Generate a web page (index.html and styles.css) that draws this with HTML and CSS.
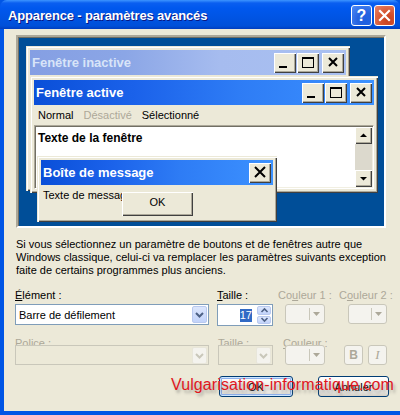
FILE: index.html
```html
<!DOCTYPE html>
<html>
<head>
<meta charset="utf-8">
<link rel="stylesheet" href="styles.css">
</head>
<body>
<div class="dialog">
  <div class="titlebar">
    <span class="title">Apparence - paramètres avancés</span>
    <div class="tb-buttons">
      <span class="tb-btn help">?</span>
      <span class="tb-btn close"><svg width="21" height="21" viewBox="0 0 21 21"><path d="M6 6 L15 15 M15 6 L6 15" stroke="#fff" stroke-width="2.2" stroke-linecap="square"/></svg></span>
    </div>
  </div>
  <div class="frame">
    <div class="preview">
      <div class="pwin inactive">
        <div class="ptitle">
          <span class="ptext-title">Fenêtre inactive</span>
          <div class="pbtns">
            <span class="cbtn"><svg width="22" height="20" viewBox="0 0 22 20"><rect x="5" y="13" width="8" height="2" fill="#000"/></svg></span>
            <span class="cbtn"><svg width="22" height="20" viewBox="0 0 22 20"><rect x="5.5" y="4.5" width="11" height="10" fill="none" stroke="#000"/><rect x="5" y="4" width="12" height="2" fill="#000"/></svg></span>
            <span class="cbtn gap"><svg width="22" height="20" viewBox="0 0 22 20"><path d="M7 5 L15 13 M15 5 L7 13" stroke="#000" stroke-width="2"/></svg></span>
          </div>
        </div>
      </div>
      <div class="pwin active">
        <div class="ptitle">
          <span class="ptext-title">Fenêtre active</span>
          <div class="pbtns">
            <span class="cbtn"><svg width="22" height="20" viewBox="0 0 22 20"><rect x="5" y="13" width="8" height="2" fill="#000"/></svg></span>
            <span class="cbtn"><svg width="22" height="20" viewBox="0 0 22 20"><rect x="5.5" y="4.5" width="11" height="10" fill="none" stroke="#000"/><rect x="5" y="4" width="12" height="2" fill="#000"/></svg></span>
            <span class="cbtn gap"><svg width="22" height="20" viewBox="0 0 22 20"><path d="M7 5 L15 13 M15 5 L7 13" stroke="#000" stroke-width="2"/></svg></span>
          </div>
        </div>
        <div class="pmenu">
          <span>Normal</span><span class="dis">Désactivé</span><span>Sélectionné</span>
        </div>
        <div class="ptextarea">
          <span class="wtext">Texte de la fenêtre</span>
          <div class="scroll">
            <span class="sbtn"><svg width="17" height="17" viewBox="0 0 17 17"><path d="M5 10 L12 10 L8.5 6.5 Z" fill="#000"/></svg></span>
            <span class="strack"></span>
            <span class="sbtn"><svg width="17" height="17" viewBox="0 0 17 17"><path d="M5 7 L12 7 L8.5 10.5 Z" fill="#000"/></svg></span>
          </div>
        </div>
      </div>
      <div class="pwin msg">
        <div class="ptitle">
          <span class="ptext-title">Boîte de message</span>
          <div class="pbtns">
            <span class="cbtn"><svg width="22" height="20" viewBox="0 0 22 20"><path d="M6 4 L16 14 M16 4 L6 14" stroke="#000" stroke-width="2"/></svg></span>
          </div>
        </div>
        <div class="msgbody">
          <span class="msgtext">Texte de message</span>
          <span class="okbtn">OK</span>
        </div>
      </div>
    </div>

    <p class="info">Si vous sélectionnez un paramètre de boutons et de fenêtres autre que<br>Windows classique, celui-ci va remplacer les paramètres suivants exception<br>faite de certains programmes plus anciens.</p>

    <div class="form">
      <span class="lbl"><u>É</u>lément :</span>
      <span class="lbl"><u>T</u>aille :</span>
      <span class="lbl dis c3a">Co<u>u</u>leur 1 :</span>
      <span class="lbl dis">C<u>o</u>uleur 2 :</span>

      <div class="combo wide"><span class="cval">Barre de défilement</span><span class="dd"><svg width="15" height="17" viewBox="0 0 15 17"><path d="M4 7 L7.5 10.5 L11 7" fill="none" stroke="#4D6185" stroke-width="2"/></svg></span></div>
      <div class="spin"><span class="sval"><span class="sel">17</span></span><span class="arrows"><span class="ar"><svg width="15" height="9" viewBox="0 0 15 9"><path d="M4.5 6 L7.5 3 L10.5 6" fill="none" stroke="#4D6185" stroke-width="1.6"/></svg></span><span class="ar"><svg width="15" height="9" viewBox="0 0 15 9"><path d="M4.5 3 L7.5 6 L10.5 3" fill="none" stroke="#4D6185" stroke-width="1.6"/></svg></span></span></div>
      <div class="colbtn c3b"><span class="sep"></span><svg width="7" height="4" viewBox="0 0 7 4"><path d="M0 0 L7 0 L3.5 4 Z" fill="#ACA899"/></svg></div>
      <div class="colbtn c4b"><span class="sep"></span><svg width="7" height="4" viewBox="0 0 7 4"><path d="M0 0 L7 0 L3.5 4 Z" fill="#ACA899"/></svg></div>

      <span class="lbl dis r2"><u>P</u>olice :</span>
      <span class="lbl dis r2 c2l">Taille :</span>
      <span class="lbl dis r2 c3l"><u>C</u>ouleur :</span>
      <span class="r2"></span>

      <div class="combo wide disabled"><span class="cval"></span><span class="dd"><svg width="15" height="17" viewBox="0 0 15 17"><path d="M4 7 L7.5 10.5 L11 7" fill="none" stroke="#C9C7BA" stroke-width="2"/></svg></span></div>
      <div class="combo small disabled"><span class="cval"></span><span class="dd"><svg width="15" height="17" viewBox="0 0 15 17"><path d="M4 7 L7.5 10.5 L11 7" fill="none" stroke="#C9C7BA" stroke-width="2"/></svg></span></div>
      <div class="colbtn c3b"><span class="sep"></span><svg width="7" height="4" viewBox="0 0 7 4"><path d="M0 0 L7 0 L3.5 4 Z" fill="#ACA899"/></svg></div>
      <div class="bi"><span class="sbtn2 bold">B</span><span class="sbtn2 ital">I</span></div>
    </div>

    <div class="actions">
      <span class="xpbtn default">OK</span>
      <span class="xpbtn">Annuler</span>
    </div>
  </div>
  <div class="watermark">Vulgarisation-informatique.com</div>
</div>
</body>
</html>
```

FILE: styles.css
```css
html, body {
  margin: 0;
  padding: 0;
}
body {
  width: 400px;
  height: 415px;
  overflow: hidden;
  font-family: "Liberation Sans", Arial, sans-serif;
  font-size: 11px;
  color: #000;
}
.dialog {
  position: relative;
  width: 400px;
  height: 415px;
  display: flex;
  flex-direction: column;
  background: #0055E5;
}
.titlebar {
  height: 29px;
  flex: none;
  display: flex;
  align-items: flex-start;
  justify-content: space-between;
  background: linear-gradient(to bottom, #3D95FF 0, #0A5FF0 3px, #0058EE 8px, #0054E3 18px, #0050D8 26px, #003DBF 29px);
  border-radius: 7px 7px 0 0;
}
.title {
  color: #fff;
  font-weight: bold;
  font-size: 13px;
  line-height: 16px;
  margin: 8px 0 0 8px;
  letter-spacing: -0.15px;
  text-shadow: 1px 1px #0A1883;
}
.tb-buttons {
  display: flex;
  gap: 2px;
  margin: 5px 5px 0 0;
}
.tb-btn {
  width: 19px;
  height: 19px;
  border: 1px solid #fff;
  border-radius: 3px;
  display: flex;
  align-items: center;
  justify-content: center;
  overflow: hidden;
}
.tb-btn.help {
  background: radial-gradient(circle at 70% 75%, #1F5FE0 0, #2663E0 40%, #4F8CF8 100%);
  color: #fff;
  font-weight: bold;
  font-size: 16px;
  font-family: "Liberation Sans", Arial, sans-serif;
}
.tb-btn.close {
  background: radial-gradient(circle at 70% 75%, #C4401E 0, #D5532F 40%, #E8856B 100%);
}
.tb-btn svg { flex: none; }

.frame {
  flex: 1;
  background: #ECE9D8;
  margin: 0 0 4px 4px;
  padding: 6px 0 0 12px;
  display: flex;
  flex-direction: column;
  position: relative;
}

/* preview */
.preview {
  position: relative;
  width: 366px;
  height: 189px;
  background: #004E98;
  border-style: solid;
  border-width: 2px;
  border-color: #ACA899 #fff #fff #ACA899;
  box-shadow: inset 1px 1px #716F64;
  flex: none;
}
.pwin {
  position: absolute;
  box-sizing: border-box;
  background: #ECE9D8;
  padding: 4px;
  box-shadow: inset 1px 1px #ECE9D8, inset 2px 2px #fff, inset -1px -1px #404040, inset -2px -2px #ACA899;
  display: flex;
  flex-direction: column;
}
.pwin.inactive { left: 8px; top: 9px; width: 324px; height: 145px; }
.pwin.active { left: 12px; top: 39px; width: 348px; height: 117px; }
.pwin.msg { left: 19px; top: 119px; width: 240px; height: 66px; }

.ptitle {
  height: 25px;
  flex: none;
  display: flex;
  align-items: center;
  justify-content: space-between;
  font-weight: bold;
  font-size: 13px;
  padding-left: 2px;
}
.inactive .ptitle {
  background: linear-gradient(90deg, #859FE3 0, #8BA6E6 30%, #A6BCEF 60%, #A9C0F1 100%);
  color: #D8E4F8;
}
.active .ptitle, .msg .ptitle {
  background: linear-gradient(90deg, #0A4FD8 0, #1B62EA 30%, #2E7CF5 60%, #3D92FF 100%);
  color: #fff;
}
.pbtns {
  display: flex;
  margin-right: 2px;
}
.cbtn {
  width: 22px;
  height: 20px;
  margin-left: 1px;
  background: #ECE9D8;
  box-shadow: inset 1px 1px #fff, inset -1px -1px #404040, inset -2px -2px #ACA899;
  display: block;
}
.cbtn svg { display: block; }
.cbtn.gap { margin-left: 3px; }

.pmenu {
  height: 20px;
  flex: none;
  display: flex;
  align-items: center;
  gap: 10px;
  padding-left: 4px;
}
.pmenu .dis { color: #ACA899; }

.ptextarea {
  flex: 1;
  background: #fff;
  display: flex;
  justify-content: space-between;
  border-style: solid;
  border-width: 1px;
  border-color: #ACA899 #fff #fff #ACA899;
  box-shadow: inset 1px 1px #716F64, inset -1px -1px #F1EFE2;
  padding: 1px;
}
.wtext {
  font-weight: bold;
  font-size: 12px;
  margin: 4px 0 0 2px;
}
.scroll {
  width: 17px;
  display: flex;
  flex-direction: column;
}
.sbtn {
  width: 17px;
  height: 17px;
  flex: none;
  background: #ECE9D8;
  box-shadow: inset 1px 1px #fff, inset -1px -1px #404040, inset -2px -2px #ACA899;
}
.sbtn svg { display: block; }
.strack {
  flex: 1;
  background: #DCD9CD;
}

.msgbody {
  position: relative;
  flex: 1;
  padding: 4px 0 0 2px;
  overflow: hidden;
}
.msgtext { white-space: nowrap; }
.okbtn {
  position: absolute;
  left: 81px;
  top: 7px;
  width: 71px;
  height: 24px;
  background: #ECE9D8;
  box-shadow: inset 1px 1px #fff, inset -1px -1px #404040, inset -2px -2px #ACA899;
  display: flex;
  align-items: center;
  justify-content: center;
  padding-bottom: 4px;
  box-sizing: border-box;
}

/* text */
.info {
  margin: 10px 0 0 0;
  line-height: 13px;
  white-space: nowrap;
}

/* form */
.form {
  margin-top: 12px;
  display: grid;
  grid-template-columns: 202px 61px 61px 48px;
  grid-template-rows: 13px 21px 13px 21px;
  row-gap: 2px;
  margin-left: -1px;
}
.form .r2 { margin-top: 10px; }
.form .lbl { line-height: 13px; white-space: nowrap; }
.form .lbl.dis { color: #ACA899; }
.form .c3a { margin-left: 0; }
.form .c2l { margin-left: 1px; }
.form .c3l { margin-left: 5px; }
.form > .r2 + .combo, .form .r2 ~ div { margin-top: 3px; }

.combo {
  box-sizing: border-box;
  height: 21px;
  border: 1px solid #7F9DB9;
  background: #fff;
  display: flex;
  align-items: center;
  justify-content: space-between;
}
.combo.wide { width: 194px; }
.combo.small { width: 55px; margin-left: 1px; height: 20px; }
.combo.disabled { background: #ECE9D8; border-color: #C9C7BA; height: 20px; }
.cval { padding-left: 3px; }
.dd {
  width: 15px;
  height: 17px;
  margin-right: 1px;
  border: 1px solid #B9C9EF;
  border-radius: 2px;
  box-sizing: border-box;
  background: linear-gradient(#DCE6FC, #C2D3FA);
  display: flex;
  align-items: center;
  justify-content: center;
}
.dd svg { flex: none; }
.disabled .dd {
  background: #F4F3EE;
  border-color: #E8E6DA;
}
.spin {
  width: 56px;
  height: 22px;
  display: flex;
}
.sval {
  width: 40px;
  box-sizing: border-box;
  border: 1px solid #7F9DB9;
  border-right: none;
  background: #fff;
  display: flex;
  align-items: center;
  justify-content: flex-end;
  padding-right: 5px;
}
.sel {
  background: #316AC5;
  color: #fff;
  line-height: 13px;
}
.arrows {
  width: 16px;
  box-sizing: border-box;
  border: 1px solid #7F9DB9;
  border-left: none;
  background: #fff;
  display: flex;
  flex-direction: column;
  padding: 1px 1px 1px 0;
  gap: 1px;
}
.ar {
  flex: 1;
  border: 1px solid #B9C9EF;
  border-radius: 2px;
  background: linear-gradient(#DCE6FC, #C2D3FA);
  display: flex;
  align-items: center;
  justify-content: center;
  overflow: hidden;
}
.ar svg { flex: none; }
.colbtn {
  box-sizing: border-box;
  width: 40px;
  height: 20px;
  border: 1px solid #C9C7BA;
  border-radius: 3px;
  background: #F4F3EE;
  display: flex;
  align-items: center;
  justify-content: flex-end;
  gap: 3px;
  padding-right: 4px;
}
.colbtn .sep {
  width: 1px;
  height: 12px;
  background: #C9C7BA;
}
.c3b { margin-left: 7px; }
.c4b { margin-left: 9px; width: 39px; }
.bi {
  display: flex;
  gap: 5px;
  margin-left: 5px;
}
.sbtn2 {
  box-sizing: border-box;
  width: 19px;
  height: 20px;
  border: 1px solid #C9C7BA;
  border-radius: 3px;
  background: #F4F3EE;
  color: #ACA899;
  display: flex;
  align-items: center;
  justify-content: center;
}
.sbtn2.bold { font-weight: bold; font-size: 12px; }
.sbtn2.ital { font-family: "Liberation Serif", serif; font-style: italic; font-size: 13px; }

/* actions */
.actions {
  display: flex;
  justify-content: flex-end;
  gap: 25px;
  margin-top: 13px;
  padding-right: 11px;
}
.xpbtn {
  box-sizing: border-box;
  width: 71px;
  height: 21px;
  border: 1px solid #003C74;
  border-radius: 3px;
  background: linear-gradient(#FFFFFF, #F4F3EE 40%, #ECEBE6 80%, #D6D0C5);
  display: flex;
  align-items: center;
  justify-content: center;
}
.xpbtn.default {
  width: 74px;
  box-shadow: inset 0 0 0 1px #CEE7FF, inset 0 0 0 2px #8EB0EC;
}

.watermark {
  position: absolute;
  left: 171px;
  top: 375px;
  color: #E0161E;
  font-family: "Liberation Sans", Arial, sans-serif;
  font-size: 16px;
  letter-spacing: 0.1px;
  line-height: 20px;
  white-space: nowrap;
  text-shadow: 2px 3px 3px rgba(90, 90, 90, 0.45);
}
```
